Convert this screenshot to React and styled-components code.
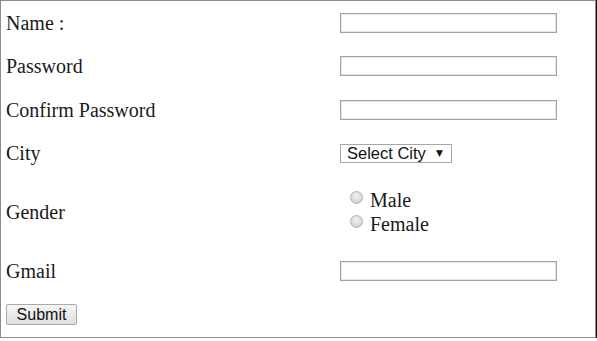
import { Fragment } from "react";
import styled, { createGlobalStyle } from "styled-components";

const GlobalStyle = createGlobalStyle`
  html, body {
    margin: 0;
    padding: 0;
    background: #fff;
  }
`;

const Frame = styled.form`
  box-sizing: border-box;
  width: 596px;
  height: 338px;
  border: 1px solid #8c8c8c;
  box-shadow: 1px 0 0 #111;
  padding: 0 0 0 5px;
  display: grid;
  grid-template-columns: 334px 217px;
  grid-template-rows: 43.5px 43.5px 43.5px 43.5px 74px 43.5px 43.5px;
  align-items: center;
  font-family: "Liberation Serif", "Times New Roman", serif;
  color: #1a1a1a;
`;

const Label = styled.label`
  font-size: 20px;
  line-height: 24px;
`;

const TextBox = styled.input`
  box-sizing: border-box;
  width: 217px;
  height: 20px;
  margin: 0;
  border: 1px solid #a4a4a4;
  box-shadow: inset 0 0 0 0.5px #d0d0d0;
  outline: none;
  padding: 0 4px;
  font: 16px "Liberation Sans", Arial, sans-serif;
`;

const SelectWrap = styled.div`
  position: relative;
  width: 112px;
  height: 19px;
`;

const Select = styled.select`
  appearance: none;
  box-sizing: border-box;
  width: 112px;
  height: 19px;
  margin: 0;
  border: 1px solid #a6a6a6;
  border-radius: 0;
  background: #fff;
  padding: 0 0 0 6px;
  font: 16.5px "Liberation Sans", Arial, sans-serif;
  line-height: 17px;
  color: #111;
`;

const Arrow = styled.span`
  position: absolute;
  right: 9px;
  top: 4px;
  font: 9px "DejaVu Sans", sans-serif;
  color: #111;
  pointer-events: none;
`;

const RadioList = styled.div`
  display: flex;
  flex-direction: column;
  padding-left: 10px;
`;

const RadioRow = styled.label`
  display: flex;
  align-items: center;
  height: 24px;
  font-size: 20px;
`;

const Radio = styled.input`
  appearance: none;
  box-sizing: border-box;
  width: 13px;
  height: 13px;
  margin: -6px 7px 0 0;
  border-radius: 50%;
  border: 1px solid #b4b4b4;
  background: radial-gradient(circle at 50% 35%, #f2f2f2 0%, #d8d8d8 60%, #c4c4c4 100%);
`;

const Button = styled.button`
  box-sizing: border-box;
  width: 71px;
  height: 21px;
  margin: 0;
  padding: 0;
  border: 1px solid #a9a9a9;
  border-radius: 2px;
  background: linear-gradient(#f7f7f7, #dedede);
  font: 16px "Liberation Sans", Arial, sans-serif;
  color: #111;
  line-height: 19px;
`;

const fields = [
  { id: "name", label: "Name :" },
  { id: "password", label: "Password", type: "password" },
  { id: "confirm", label: "Confirm Password", type: "password" },
];

export default function App() {
  return (
    <>
      <GlobalStyle />
      <Frame onSubmit={(e) => e.preventDefault()}>
        {fields.map(({ id, label, type }) => (
          <Fragment key={id}>
            <Label htmlFor={id}>{label}</Label>
            <TextBox id={id} type={type || "text"} />
          </Fragment>
        ))}
        <Label htmlFor="city">City</Label>
        <SelectWrap>
          <Select id="city" defaultValue="">
            <option value="">Select City</option>
            <option>Delhi</option>
            <option>Mumbai</option>
          </Select>
          <Arrow>▼</Arrow>
        </SelectWrap>
        <Label>Gender</Label>
        <RadioList>
          <RadioRow>
            <Radio type="radio" name="gender" />
            Male
          </RadioRow>
          <RadioRow>
            <Radio type="radio" name="gender" />
            Female
          </RadioRow>
        </RadioList>
        <Label htmlFor="gmail">Gmail</Label>
        <TextBox id="gmail" type="text" />
        <div>
          <Button type="submit">Submit</Button>
        </div>
      </Frame>
    </>
  );
}
